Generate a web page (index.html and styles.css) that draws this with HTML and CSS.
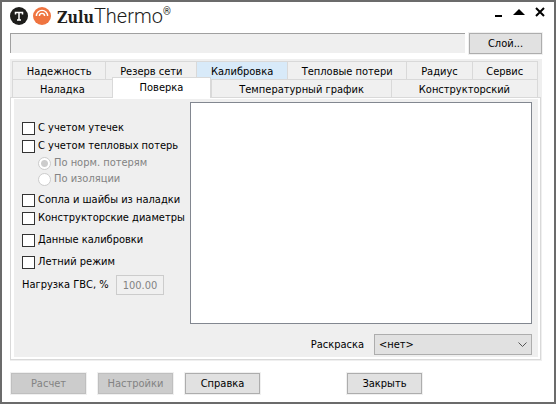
FILE: index.html
```
<!DOCTYPE html>
<html lang="ru">
<head>
    <meta charset="UTF-8">
    <meta name="viewport" content="width=device-width, initial-scale=1.0">
    <title>ZuluThermo</title>
    <link rel="stylesheet" href="styles.css">
</head>
<body>
    <div class="window">
        <header class="titlebar">
            <svg class="logo" width="42" height="18" viewBox="0 0 42 18">
                <circle cx="9" cy="9" r="9" fill="#1d1d1b"/>
                <path d="M5.5 7.4V5.5h7v1.9M9 5.5v7.5M7 13h4" fill="none" stroke="#fff" stroke-width="1.5"/>
                <circle cx="32" cy="9" r="9" fill="#ef7440"/>
                <path d="M26.4 9a5.6 5.6 0 0 1 11.2 0M29.4 9a2.6 2.6 0 0 1 5.2 0" fill="none" stroke="#fff" stroke-width="1.4"/>
            </svg>
            <h1 class="brand"><span class="brand-zulu">Zulu</span><span class="brand-thermo">Thermo</span><sup class="brand-mark">®</sup></h1>
            <div class="window-controls">
                <button class="control" aria-label="Свернуть"><svg width="12" height="12" viewBox="0 0 12 12"><path d="M3 9h7v2H3z"/></svg></button>
                <button class="control" aria-label="Развернуть"><svg width="12" height="12" viewBox="0 0 12 12"><path d="M0 9l6-6 6 6z"/></svg></button>
                <button class="control" aria-label="Закрыть окно"><svg width="12" height="12" viewBox="0 0 12 12"><path d="M2 2l8 8M10 2l-8 8" fill="none" stroke="#000" stroke-width="2"/></svg></button>
            </div>
        </header>

        <div class="layer-row">
            <div class="layer-name"></div>
            <button class="button layer-button">Слой...</button>
        </div>

        <main class="tabs">
            <div class="tab-row">
                <button class="tab">Надежность</button>
                <button class="tab">Резерв сети</button>
                <button class="tab hover">Калибровка</button>
                <button class="tab">Тепловые потери</button>
                <button class="tab">Радиус</button>
                <button class="tab">Сервис</button>
            </div>
            <div class="tab-row">
                <button class="tab">Наладка</button>
                <button class="tab active">Поверка</button>
                <button class="tab">Температурный график</button>
                <button class="tab">Конструкторский</button>
            </div>

            <div class="panel">
                <div class="panel-body">
                    <div class="options">
                        <div class="group">
                            <label class="check"><input type="checkbox">С учетом утечек</label>
                            <label class="check"><input type="checkbox">С учетом тепловых потерь</label>
                            <label class="radio"><input type="radio" name="losses" checked disabled>По норм. потерям</label>
                            <label class="radio"><input type="radio" name="losses" disabled>По изоляции</label>
                        </div>
                        <div class="group">
                            <label class="check"><input type="checkbox">Сопла и шайбы из наладки</label>
                            <label class="check"><input type="checkbox">Конструкторские диаметры</label>
                        </div>
                        <label class="check"><input type="checkbox">Данные калибровки</label>
                        <label class="check"><input type="checkbox">Летний режим</label>
                        <div class="load">
                            <label for="load">Нагрузка ГВС, %</label>
                            <input class="load-value" id="load" type="text" value="100.00" disabled>
                        </div>
                    </div>
                    <div class="results">
                        <div class="log"></div>
                        <div class="coloring">
                            <label for="coloring">Раскраска</label>
                            <select class="select" id="coloring">
                                <option>&lt;нет&gt;</option>
                            </select>
                        </div>
                    </div>
                </div>
            </div>
        </main>

        <footer class="actions">
            <button class="button" disabled>Расчет</button>
            <button class="button" disabled>Настройки</button>
            <button class="button">Справка</button>
            <button class="button close">Закрыть</button>
        </footer>
    </div>
</body>
</html>
```
FILE: styles.css
```
* {
    margin: 0;
    padding: 0;
    box-sizing: border-box;
}
body, button, input, select {
    font-family: Tahoma, "DejaVu Sans Condensed", "Noto Sans", sans-serif;
    font-size: 11px;
    line-height: 14px;
    color: #000;
}
.window {
    display: flex;
    flex-direction: column;
    min-height: 100vh;
    padding: 4px 12px 8px 8px;
    background: #fff;
    border: 2px solid #6b6b6b;
}

/* Title bar */
.titlebar {
    display: flex;
    align-items: center;
    height: 20px;
}
.logo {
    flex: none;
    margin-right: 5px;
}
.brand {
    display: flex;
    align-items: baseline;
    padding-top: 2px;
    font-size: 20px;
    line-height: 20px;
    font-weight: normal;
    color: #1d1d1b;
}
.brand-zulu {
    font-family: "DejaVu Serif Condensed", "DejaVu Serif", serif;
    font-size: 16px;
    font-weight: bold;
}
.brand-thermo {
    font-family: Roboto, sans-serif;
    font-weight: 300;
}
.brand-mark {
    align-self: flex-start;
    font-family: Roboto, sans-serif;
    font-size: 10px;
    line-height: 12px;
}
.window-controls {
    display: flex;
    align-self: flex-start;
    gap: 9px;
    margin-right: -4px;
    margin-left: auto;
}
.control {
    width: 12px;
    height: 12px;
    background: none;
    border: none;
}
.control svg {
    display: block;
}

/* Layer row */
.layer-row {
    display: flex;
    gap: 4px;
    margin-top: 7px;
}
.layer-name {
    flex: 1;
    height: 20px;
    background: #efefef;
    border-top: 1px solid #a0a0a0;
    border-left: 1px solid #a0a0a0;
}
.button {
    width: 75px;
    height: 21px;
    padding-top: 1px;
    background: #e1e1e1;
    border: 1px solid #adadad;
    box-shadow: 0 0 0 1px #f0f0f0;
}
.layer-button {
    width: 73px;
}
.button:disabled {
    color: #838383;
    background: #ccc;
    border-color: #bfbfbf;
}

/* Tabs */
.tabs {
    display: flex;
    flex: 1;
    flex-direction: column;
    margin-top: 5px;
    padding: 2px 1px 1px 0;
    background: #efefef;
}
.tab-row {
    display: flex;
    height: 18px;
    margin: 0 3px 0 2px;
}
.tab {
    flex: 1 0 auto;
    padding-top: 2px;
    background: #f0f0f0;
    border: 1px solid #d9d9d9;
    border-width: 1px 0 0 1px;
}
.tab:last-child {
    border-right-width: 1px;
}
.tab.hover {
    background: #d8eaf9;
}
.tab.active {
    height: 21px;
    margin-top: -2px;
    padding-top: 0;
    background: #fff;
    border-right-width: 1px;
    z-index: 1;
}
.panel {
    display: flex;
    flex: 1;
    padding: 1px 2px 2px 3px;
    background: #fff;
    border: 1px solid #d9d9d9;
}
.panel-body {
    display: flex;
    flex: 1;
    gap: 8px;
    padding: 3px 6px 2px 8px;
    background: #efefef;
}

/* Options */
.options {
    display: flex;
    flex: none;
    flex-direction: column;
    gap: 4px;
    width: 160px;
    padding-top: 17px;
}
.check, .radio {
    display: flex;
    align-items: center;
    gap: 3px;
    height: 18px;
    white-space: nowrap;
}
.radio {
    height: 16px;
    margin-left: 16px;
    color: #838383;
}
.check input, .radio input {
    appearance: none;
    flex: none;
    width: 13px;
    height: 13px;
    background: #fff;
    border: 1px solid #333;
}
.radio input {
    border-color: #ccc;
    border-radius: 50%;
}
.radio input:checked {
    background: radial-gradient(circle, #ccc 3px, #fff 4px);
}
.check input:checked {
    background: #333;
}
.load {
    display: flex;
    align-items: center;
    justify-content: space-between;
    padding-right: 18px;
}
.load-value {
    width: 48px;
    height: 20px;
    text-align: center;
    color: #838383;
    background: #f0f0f0;
    border: 1px solid #ccc;
}

/* Results */
.results {
    display: flex;
    flex: 1;
    flex-direction: column;
    gap: 10px;
}
.log {
    flex: 1;
    background: #fff;
    border: 1px solid #828790;
}
.coloring {
    display: flex;
    align-items: center;
    justify-content: flex-end;
    gap: 10px;
}
.select {
    appearance: none;
    width: 158px;
    height: 21px;
    padding: 1px 4px 0;
    background: #e1e1e1 url("data:image/svg+xml,%3Csvg xmlns='http://www.w3.org/2000/svg' width='9' height='6'%3E%3Cpath d='M.5 .5l4 4 4-4' fill='none' stroke='%23555'/%3E%3C/svg%3E") no-repeat right 4px center;
    border: 1px solid #adadad;
}

/* Bottom buttons */
.actions {
    display: flex;
    gap: 12px;
    margin-top: 12px;
    padding-left: 1px;
}
.close {
    margin-left: 75px;
}
```
